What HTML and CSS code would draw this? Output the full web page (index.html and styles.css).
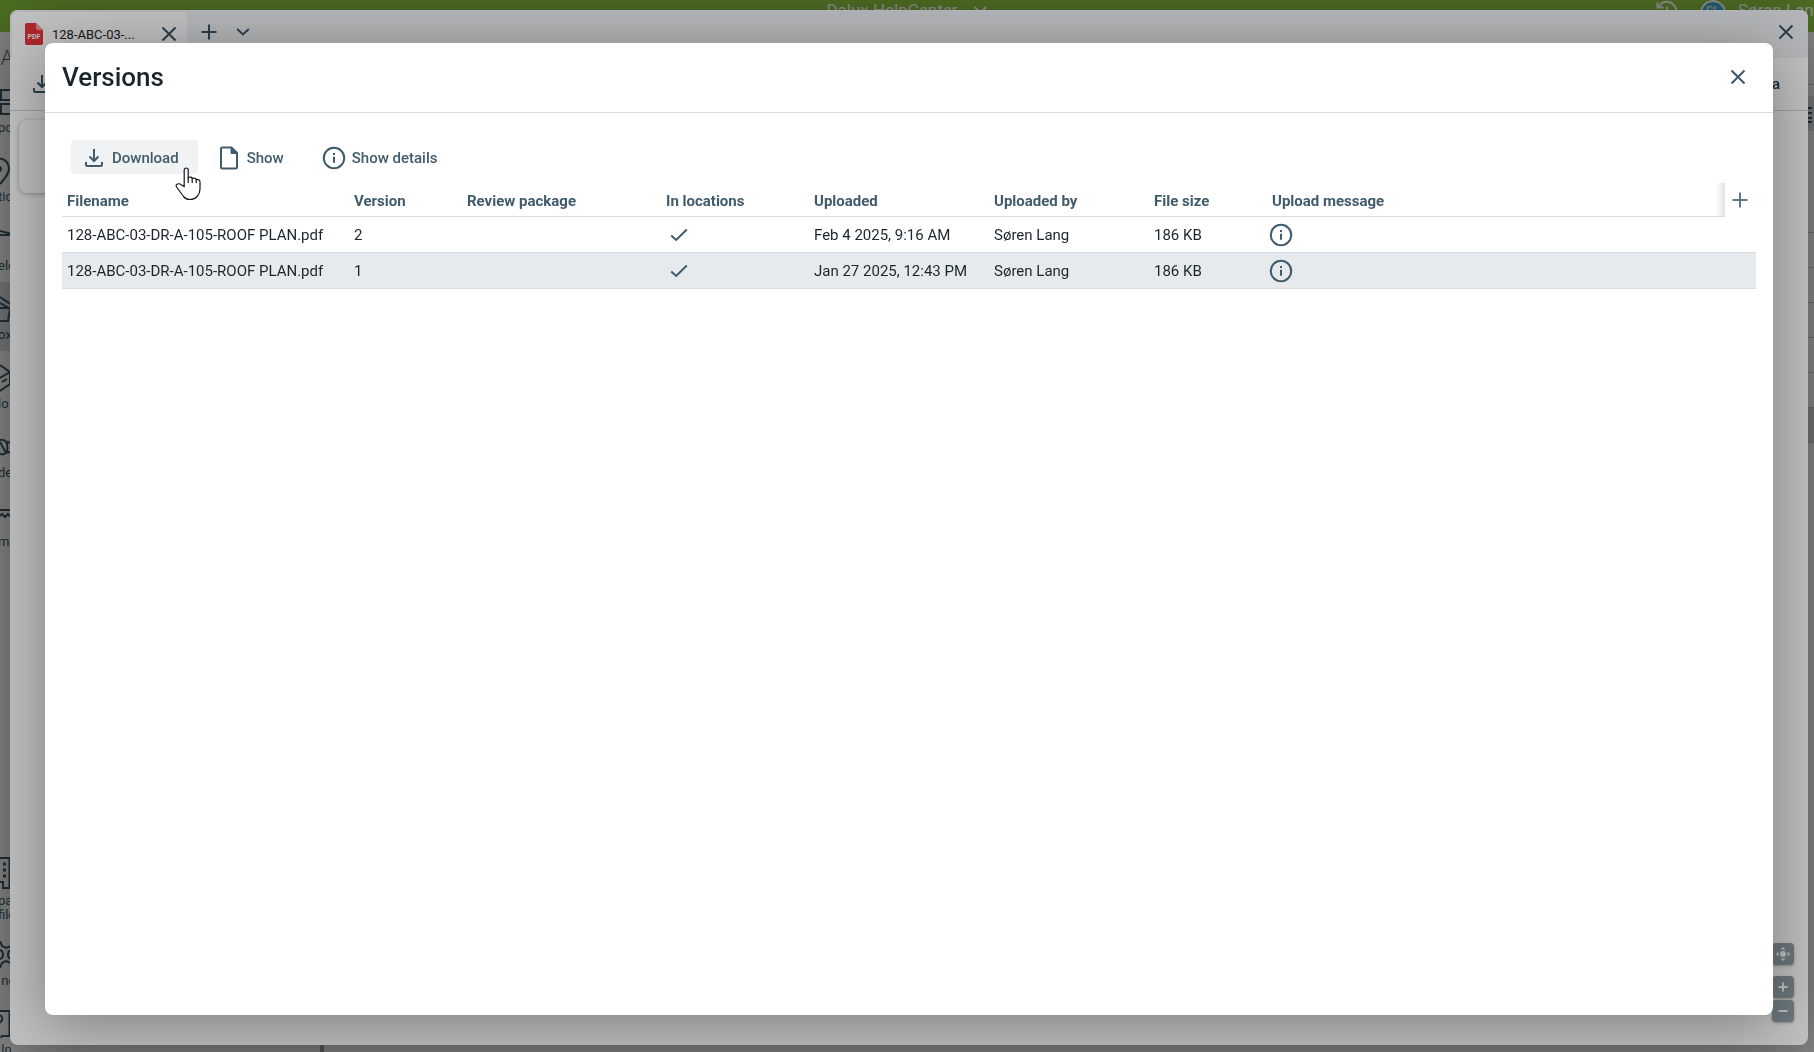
FILE: index.html
```
<!DOCTYPE html>
<html lang="en">
<head>
    <meta charset="UTF-8">
    <meta name="viewport" content="width=device-width, initial-scale=1.0">
    <title>Versions</title>
    <link rel="stylesheet" href="styles.css">
</head>
<body>

    <!-- Shared icons -->
    <svg class="sprite" aria-hidden="true">
        <symbol id="i-close" viewBox="0 0 16 16"><path d="M1.5 1.5l13 13M14.5 1.5l-13 13"/></symbol>
        <symbol id="i-plus" viewBox="0 0 16 16"><path d="M8 .5v15M.5 8h15"/></symbol>
        <symbol id="i-chevron" viewBox="0 0 14 8"><path d="M1.2 1l5.8 5.4L12.800 1"/></symbol>
        <symbol id="i-download" viewBox="0 0 24 24"><path d="M12 3v12M7.500 10.500l4.500 4.500 4.500-4.500M4 16v2.500q0 1.500 1.500 1.500h13q1.500 0 1.500-1.500V16"/></symbol>
        <symbol id="i-info" viewBox="0 0 24 24"><circle cx="12" cy="12" r="10.200"/><path d="M12 10.800v6M12 7v2"/></symbol>
        <symbol id="i-check" viewBox="0 0 18 14"><path d="M1.200 7.500l5 4.500L16.800 1.500"/></symbol>
    </svg>

    <!-- Main application -->
    <div class="app">
        <header class="topbar">
            <button class="project" type="button">Dalux HelpCenter <svg class="icon chevron"><use href="#i-chevron"/></svg></button>
            <div class="user">
                <svg class="icon history" viewBox="0 0 22 22"><path d="M3 6.500a9 9 0 1 1-1 5M1.500 2v5.500h6M11 6.500V12h4.500"/></svg>
                <span class="avatar">SL</span>
                <span>Søren Lang</span>
            </div>
        </header>
        <div class="workspace">
            <nav class="sidebar">
                <div class="logo">A</div>
                <a href="#" class="nav-item">
                    <svg class="icon" viewBox="0 0 24 28"><path d="M1 2H14V12H1ZM1 16H14V26H1Z"/></svg>
                    <span>po</span>
                </a>
                <a href="#" class="nav-item">
                    <svg class="icon" viewBox="0 0 24 28"><path d="M0 27c5-6 9-10 9-15.500a10 10 0 0 0-9-10"/><circle cx="-1" cy="12" r="2"/></svg>
                    <span>tic</span>
                </a>
                <a href="#" class="nav-item">
                    <svg class="icon" viewBox="0 0 24 28"><path d="M0 5l12 3M0 9h14"/></svg>
                    <span>elc</span>
                </a>
                <a href="#" class="nav-item active">
                    <svg class="icon" viewBox="0 0 24 28"><path d="M0 2l12 8M0 8l9 5M0 13h12M0 26h8l2-12"/></svg>
                    <span>ox</span>
                </a>
                <a href="#" class="nav-item">
                    <svg class="icon" viewBox="0 0 24 28"><path d="M0 1l10 7v12L0 27M0 14l10-6M2 18l5-3"/></svg>
                    <span>lo</span>
                </a>
                <a href="#" class="nav-item">
                    <svg class="icon" viewBox="0 0 24 28"><path d="M0 7q9-2 7 12M0 9l6 11q-4 3-6 0M7 8q1 3 4 0v12q-3-2-4 0"/></svg>
                    <span>de</span>
                </a>
                <a href="#" class="nav-item">
                    <svg class="icon" viewBox="0 0 24 28"><path d="M0 8h14M0 14l2-2 3 3 3-3 3 3 3-3"/></svg>
                    <span>me</span>
                </a>
                <div class="nav-bottom">
                    <a href="#" class="nav-item tall">
                        <svg class="icon" viewBox="0 0 24 32"><path d="M0 1h10M9.500 1v30H3v-6H0"/><path d="M3 7h3M3 13h3M3 19h3" stroke-width="3"/></svg>
                        <span>pa<br>file</span>
                    </a>
                    <a href="#" class="nav-item">
                        <svg class="icon" viewBox="0 0 24 28"><path d="M0 0l2 5 4 2 5-2M0 27l2-5 4-2 5 2M0 9q3 1 3 4.500T0 18M12 9q-4 0-4 4.500t4 4.500"/></svg>
                        <span>&nbsp;ng</span>
                    </a>
                    <a href="#" class="nav-item">
                        <svg class="icon" viewBox="0 0 24 28"><path d="M0 1h9.500v25H2l-2 3M0 5q3 2 2 5l-2 3"/></svg>
                        <span>&nbsp;ln</span>
                    </a>
                </div>
            </nav>
            <div class="tree"></div>
            <div class="files">
                <div class="files-bar"></div>
                <div class="files-head"><svg class="icon" viewBox="0 0 20 18"><path d="M0 3h20M0 8h20M0 13h20M0 17h20"/></svg></div>
                <div class="file-row first"></div>
                <div class="file-row"></div>
                <div class="file-row"></div>
                <div class="file-row"></div>
                <div class="file-row"></div>
                <div class="file-row"></div>
                <div class="file-row active"></div>
            </div>
        </div>
    </div>

    <!-- Document viewer -->
    <div class="overlay overlay-viewer">
        <section class="viewer">
            <div class="tabs">
                <div class="tab">
                    <svg class="pdf" viewBox="0 0 18 22"><path d="M2 0h9l7 7v13q0 2-2 2H2q-2 0-2-2V2Q0 0 2 0z" fill="#e8333a"/><path d="M11 0v5q0 2 2 2h5z" fill="#f59a9d"/><text x="9" y="16" text-anchor="middle">PDF</text></svg>
                    <span class="tab-name">128-ABC-03-...</span>
                    <button type="button" aria-label="Close tab"><svg class="icon x"><use href="#i-close"/></svg></button>
                </div>
                <button type="button" aria-label="New tab"><svg class="icon x"><use href="#i-plus"/></svg></button>
                <button type="button" aria-label="All tabs"><svg class="icon chevron"><use href="#i-chevron"/></svg></button>
                <button type="button" class="viewer-close" aria-label="Close viewer"><svg class="icon x"><use href="#i-close"/></svg></button>
            </div>
            <div class="viewer-toolbar">
                <svg class="icon"><use href="#i-download"/></svg>
                <b>a</b>
            </div>
            <div class="canvas">
                <div class="card"></div>
                <div class="map-controls">
                    <button type="button" class="fit" aria-label="Fit"><svg viewBox="0 0 22 22"><circle cx="11" cy="11" r="3"/><path d="M8.500 6.500L11 4l2.500 2.500zM8.500 15.500L11 18l2.500-2.500zM6.500 8.500L4 11l2.500 2.500zM15.500 8.500L18 11l-2.500 2.500z"/></svg></button>
                    <button type="button" aria-label="Zoom in"><svg viewBox="0 0 22 22"><path d="M10 6.500h2V10h3.500v2H12v3.500h-2V12H6.500v-2H10z"/></svg></button>
                    <button type="button" aria-label="Zoom out"><svg viewBox="0 0 22 22"><path d="M6.500 10h9v2h-9z"/></svg></button>
                </div>
            </div>
        </section>
    </div>

    <!-- Versions dialog -->
    <div class="overlay overlay-dialog">
        <section class="dialog" role="dialog" aria-labelledby="dialogTitle">
            <header class="dialog-header">
                <h1 id="dialogTitle">Versions</h1>
                <button type="button" aria-label="Close"><svg class="icon x"><use href="#i-close"/></svg></button>
            </header>
            <div class="dialog-body">
                <div class="toolbar">
                    <button type="button" class="hover">
                        <svg class="icon"><use href="#i-download"/></svg>Download
                        <svg class="cursor" viewBox="0 0 26 34"><path d="M9.200 19.500V3.200q0-2.200 2-2.200t2 2.200v7.300q3.600-1 4 .8 3.400-.6 4 1.200 3.800-.3 3.800 2.500V22q0 4-2.500 7-3 3.500-7.500 3.500-4 0-6.500-3L1.600 20q-1.300-2 .9-3 2-.8 4 1z"/><path d="M13.200 10.500V16M17.200 11.300V16M21.200 12.500V16"/></svg>
                    </button>
                    <button type="button">
                        <svg class="icon" viewBox="0 0 24 24"><path d="M4 3q0-1.500 1.500-1.500H14.500L20 7v14q0 1.500-1.500 1.500h-13Q4 22.500 4 21z"/><path d="M14 1.500V7.500h6.500L14.500 1.500z" fill="currentColor" stroke-width="1"/></svg>Show
                    </button>
                    <button type="button">
                        <svg class="icon"><use href="#i-info"/></svg>Show details
                    </button>
                </div>
                <table class="versions">
                    <colgroup>
                        <col class="c-name"><col class="c-version"><col class="c-review"><col class="c-locations"><col class="c-uploaded"><col class="c-by"><col class="c-size"><col><col class="c-add">
                    </colgroup>
                    <thead>
                        <tr>
                            <th>Filename</th>
                            <th>Version</th>
                            <th>Review package</th>
                            <th>In locations</th>
                            <th>Uploaded</th>
                            <th>Uploaded by</th>
                            <th>File size</th>
                            <th class="last">Upload message</th>
                            <th class="add"><button type="button" aria-label="Add column"><svg class="icon x"><use href="#i-plus"/></svg></button></th>
                        </tr>
                    </thead>
                    <tbody>
                        <tr>
                            <td>128-ABC-03-DR-A-105-ROOF PLAN.pdf</td>
                            <td>2</td>
                            <td></td>
                            <td class="check"><svg class="icon"><use href="#i-check"/></svg></td>
                            <td>Feb 4 2025, 9:16 AM</td>
                            <td>Søren Lang</td>
                            <td>186 KB</td>
                            <td class="info"><svg class="icon"><use href="#i-info"/></svg></td>
                            <td></td>
                        </tr>
                        <tr class="selected">
                            <td>128-ABC-03-DR-A-105-ROOF PLAN.pdf</td>
                            <td>1</td>
                            <td></td>
                            <td class="check"><svg class="icon"><use href="#i-check"/></svg></td>
                            <td>Jan 27 2025, 12:43 PM</td>
                            <td>Søren Lang</td>
                            <td>186 KB</td>
                            <td class="info"><svg class="icon"><use href="#i-info"/></svg></td>
                            <td></td>
                        </tr>
                    </tbody>
                </table>
            </div>
        </section>
    </div>

</body>
</html>
```
FILE: styles.css
```
* {
    box-sizing: border-box;
}

body {
    margin: 0;
    height: 100vh;
    overflow: hidden;
    font-family: Roboto, "Liberation Sans", sans-serif;
    font-size: 15px;
    color: #1b262c;
}

button {
    display: flex;
    align-items: center;
    padding: 0;
    border: none;
    background: none;
    font: inherit;
    color: inherit;
    cursor: pointer;
}

a {
    color: inherit;
    text-decoration: none;
}

.sprite {
    display: none;
}

.icon {
    display: block;
    flex: none;
    width: 24px;
    height: 24px;
    fill: none;
    stroke: currentColor;
    stroke-width: 2;
}

.icon.x {
    width: 16px;
    height: 16px;
}

.icon.chevron {
    width: 14px;
    height: 8px;
}

/* Main application */
.app {
    display: flex;
    flex-direction: column;
    height: 100vh;
    color: #3a5565;
}

.topbar {
    display: flex;
    justify-content: flex-end;
    position: relative;
    height: 32px;
    background-color: #8cc63f;
    color: white;
    font-size: 17px;
    line-height: 20px;
}

.project {
    position: absolute;
    left: 50%;
    transform: translateX(-50%);
    gap: 16px;
}

.user {
    display: flex;
    gap: 12px;
    height: 24px;
    width: 158px;
    white-space: nowrap;
}

.history {
    width: 22px;
    height: 22px;
    margin-right: 10px;
}

.avatar {
    flex: none;
    width: 26px;
    height: 26px;
    border: 2px solid white;
    border-radius: 50%;
    background-color: #3fb1d0;
    font-size: 13px;
    line-height: 18px;
    text-align: center;
}

.workspace {
    display: flex;
    flex: 1;
}

.sidebar {
    display: flex;
    flex-direction: column;
    width: 60px;
    background-color: #f0f0f0;
    font-size: 13px;
    line-height: 14px;
}

.logo {
    height: 43px;
    padding: 16px 1px 0;
    font: 300 20px/20px "Open Sans", sans-serif;
}

.nav-item {
    display: flex;
    flex-direction: column;
    gap: 5px;
    height: 69px;
    padding-top: 13px;
}

.nav-item span {
    margin-left: -2px;
}

.nav-item .icon {
    height: 28px;
}

.nav-item.active {
    background-color: #cfd3d8;
}

.nav-bottom {
    margin-top: auto;
    height: 208px;
}

.nav-item.tall {
    height: 84px;
}

.nav-item.tall .icon {
    height: 32px;
}

.tree {
    width: 264px;
    border-right: 4px solid #9ea4a9;
    background-color: #f0f0f0;
}

.files {
    flex: 1;
    background-color: #f5f5f5;
}

.files-bar {
    height: 53px;
    border-bottom: 1px solid #bcc2c6;
}

.files-head {
    display: flex;
    justify-content: flex-end;
    height: 46px;
    padding-top: 20px;
    background: linear-gradient(#f5f5f5 11px, #d5d9dd 11px);
}

.files-head .icon {
    height: 18px;
}

.file-row {
    height: 35px;
    border-bottom: 1px solid #bcc2c6;
}

.file-row.first {
    height: 102px;
}

.file-row.active {
    background-color: #cfd3d8;
}

/* Overlays */
.overlay {
    position: fixed;
    inset: 0;
    display: flex;
    background-color: rgba(0, 0, 0, 0.25);
}

.overlay-viewer {
    padding: 10px 6px 7px 10px;
}

.overlay-dialog {
    padding: 43px 41px 37px 45px;
}

.viewer,
.dialog {
    display: flex;
    flex: 1;
    flex-direction: column;
    border-radius: 8px;
    background-color: white;
    box-shadow: 0 10px 60px rgba(0, 0, 0, 0.35);
}

/* Viewer */
.viewer {
    color: #3a5565;
}

.tabs {
    display: flex;
    align-items: center;
    height: 48px;
    padding: 2px 14px 0 2px;
    border-radius: 8px 8px 0 0;
    background-color: #eef1f4;
}

.tabs > button {
    width: 34px;
    height: 44px;
    justify-content: center;
    padding-bottom: 6px;
}

.tabs > .viewer-close {
    width: 16px;
    margin-left: auto;
}

.tabs .tab + button {
    margin-left: 5px;
}

.tab {
    display: flex;
    align-items: center;
    width: 175px;
    height: 46px;
    padding: 0 10px 2px 13px;
    border-radius: 6px 6px 0 0;
    background-color: white;
}

.pdf {
    width: 18px;
    height: 22px;
    margin-right: 9px;
}

.pdf text {
    font: bold 7px Roboto, sans-serif;
    fill: white;
}

.tab-name {
    flex: 1;
    font-size: 13px;
    color: #1b262c;
}

.viewer-toolbar {
    display: flex;
    align-items: center;
    justify-content: space-between;
    height: 53px;
    padding: 0 28px 0 20px;
    border-bottom: 1px solid #d0d8dd;
}

.viewer-toolbar b {
    font-weight: 500;
    font-size: 15px;
    color: #1f3a4a;
}

.canvas {
    display: flex;
    flex: 1;
    align-items: flex-start;
    justify-content: space-between;
    padding: 9px 14px 23px 9px;
}

.card {
    width: 300px;
    height: 73px;
    border-radius: 8px;
    background-color: white;
    box-shadow: 0 1px 5px rgba(0, 0, 0, 0.3);
}

.map-controls {
    display: flex;
    flex-direction: column;
    align-self: flex-end;
    gap: 2px;
}

.map-controls button {
    width: 22px;
    height: 22px;
    border-radius: 4px;
    background-color: #91a0a8;
    box-shadow: 0 1px 3px rgba(0, 0, 0, 0.3);
    fill: white;
}

.map-controls .fit {
    margin-bottom: 9px;
}

/* Dialog */
.dialog-header {
    display: flex;
    align-items: center;
    justify-content: space-between;
    height: 70px;
    padding: 0 27px 2px 17px;
    border-bottom: 1px solid #d5dde1;
}

.dialog-header button {
    color: #3c5868;
}

h1 {
    margin: 0;
    font-size: 26px;
    font-weight: 500;
}

.dialog-body {
    padding: 27px 17px;
}

.toolbar {
    display: flex;
    gap: 8px;
    margin: 0 9px 9px;
    color: #405c6c;
    font-weight: 500;
}

.toolbar button {
    position: relative;
    gap: 6px;
    height: 34px;
    padding: 1px 19px 0 11px;
    border-radius: 4px;
}

.toolbar .hover {
    background-color: #f0f2f4;
}

.cursor {
    position: absolute;
    top: 27px;
    right: -3px;
    width: 26px;
    height: 34px;
    fill: white;
    stroke: #15151f;
    stroke-width: 1.2;
}

.versions {
    width: 100%;
    table-layout: fixed;
    border-collapse: separate;
    border-spacing: 0;
}

.c-name { width: 287px; }
.c-version { width: 113px; }
.c-review { width: 199px; }
.c-locations { width: 148px; }
.c-uploaded { width: 180px; }
.c-by { width: 160px; }
.c-size { width: 118px; }
.c-add { width: 31px; }

.versions th,
.versions td {
    height: 36px;
    padding: 0 5px;
    border-bottom: 1px solid #d5dde1;
    text-align: left;
    white-space: nowrap;
}

.versions th {
    height: 34px;
    padding-top: 2px;
    color: #405c6c;
    font-weight: 700;
}

.versions .last {
    background: linear-gradient(to left, #e2e2e2, white) no-repeat right / 9px 100%;
}

.versions .add {
    padding: 0 0 0 7px;
    border-bottom: none;
    color: #5f7886;
}

.versions .selected {
    background-color: #e6eaed;
}

.versions .check,
.versions .info {
    color: #405c6c;
}

.check .icon {
    width: 18px;
    height: 14px;
    margin-left: 4px;
}

.versions .info {
    padding-left: 2px;
}
```
